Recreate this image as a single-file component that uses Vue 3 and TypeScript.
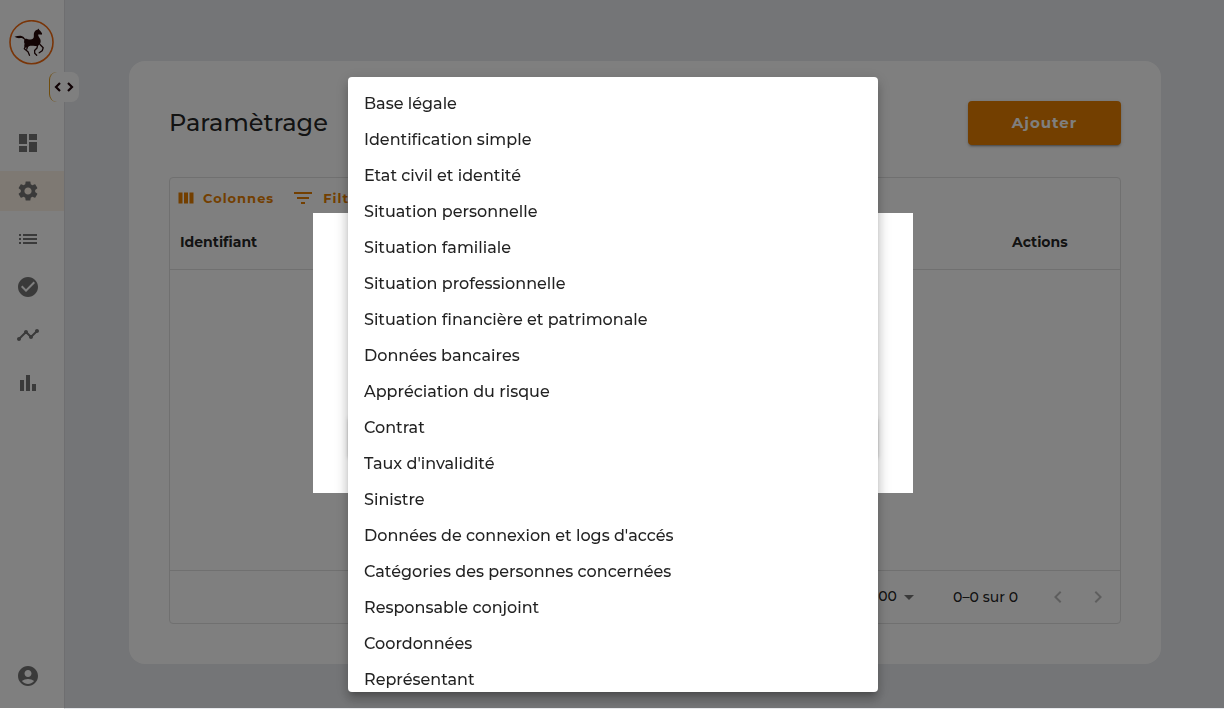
<script setup lang="ts">
const navItems: { label: string; path: string; active?: boolean }[] = [
  { label: 'Tableau de bord', path: 'M3 13h8V3H3v10zm0 8h8v-6H3v6zm10 0h8V11h-8v10zm0-18v6h8V3h-8z' },
  { label: 'Paramètrage', active: true, path: 'M19.14 12.94c.04-.3.06-.61.06-.94 0-.32-.02-.64-.07-.94l2.03-1.58c.18-.14.23-.41.12-.61l-1.92-3.32c-.12-.22-.37-.29-.59-.22l-2.39.96c-.5-.38-1.03-.7-1.62-.94l-.36-2.54c-.04-.24-.24-.41-.48-.41h-3.84c-.24 0-.43.17-.47.41l-.36 2.54c-.59.24-1.13.57-1.62.94l-2.39-.96c-.22-.08-.47 0-.59.22L2.74 8.87c-.12.21-.08.47.12.61l2.03 1.58c-.05.3-.09.63-.09.94s.02.64.07.94l-2.03 1.58c-.18.14-.23.41-.12.61l1.92 3.32c.12.22.37.29.59.22l2.39-.96c.5.38 1.03.7 1.62.94l.36 2.54c.05.24.24.41.48.41h3.84c.24 0 .44-.17.47-.41l.36-2.54c.59-.24 1.13-.56 1.62-.94l2.39.96c.22.08.47 0 .59-.22l1.92-3.32c.12-.22.07-.47-.12-.61l-2.01-1.58zM12 15.6c-1.98 0-3.6-1.62-3.6-3.6s1.62-3.6 3.6-3.6 3.6 1.62 3.6 3.6-1.62 3.6-3.6 3.6z' },
  { label: 'Liste', path: 'M3 13h2v-2H3v2zm0 4h2v-2H3v2zm0-8h2V7H3v2zm4 4h14v-2H7v2zm0 4h14v-2H7v2zM7 7v2h14V7H7z' },
  { label: 'Validation', path: 'M12 2C6.48 2 2 6.48 2 12s4.48 10 10 10 10-4.48 10-10S17.52 2 12 2zm-2 15l-5-5 1.41-1.41L10 14.17l7.59-7.59L19 8l-9 9z' },
  { label: 'Suivi', path: 'M23 8c0 1.1-.9 2-2 2-.18 0-.35-.02-.51-.07l-3.56 3.55c.05.16.07.34.07.52 0 1.1-.9 2-2 2s-2-.9-2-2c0-.18.02-.36.07-.52l-2.55-2.55c-.16.05-.34.07-.52.07s-.36-.02-.52-.07l-4.55 4.56c.05.16.07.33.07.51 0 1.1-.9 2-2 2s-2-.9-2-2 .9-2 2-2c.18 0 .35.02.51.07l4.56-4.55C8.02 9.36 8 9.18 8 9c0-1.1.9-2 2-2s2 .9 2 2c0 .18-.02.36-.07.52l2.55 2.55c.16-.05.34-.07.52-.07s.36.02.52.07l3.55-3.56C19.02 8.35 19 8.18 19 8c0-1.1.9-2 2-2s2 .9 2 2z' },
  { label: 'Statistiques', path: 'M4 9h4v11H4zm12 4h4v7h-4zm-6-9h4v16h-4z' },
]

const options: string[] = [
  'Base légale',
  'Identification simple',
  'Etat civil et identité',
  'Situation personnelle',
  'Situation familiale',
  'Situation professionnelle',
  'Situation financière et patrimonale',
  'Données bancaires',
  'Appréciation du risque',
  'Contrat',
  "Taux d'invalidité",
  'Sinistre',
  "Données de connexion et logs d'accés",
  'Catégories des personnes concernées',
  'Responsable conjoint',
  'Coordonnées',
  'Représentant',
]
</script>

<template>
  <div class="app">
    <aside class="sidebar">
      <a href="#" class="logo" aria-label="Accueil">
        <svg viewBox="0 0 45 45" width="45" height="45">
          <circle cx="22.500" cy="22.200" r="21.500" fill="#fff" stroke="#f26a10" stroke-width="1.600" />
          <path
            fill="#260808"
            d="M5.500 16.800C8 16.200 10 15.600 12.500 16c2 .3 2.600 1.600 3.600 2.800 1.600-.3 3.400.8 5.400.7 2-.1 3-.8 3.300-2.400.2-2-.4-3.800.8-5.400.9-1.400 2-2 3.300-2.200l.9-1 .3 1.300c1.300.7 1.700 2 3 3.400l-.4 1.500-1.500-.1-2-.2c-.2 1.700 1.200 3 2 4.700.8 1.900.6 3.900-.6 5.500-1 1.100-2.600 1.400-4.400 1.500-2.500-.3-4.600-.5-6.200.1-1.200 1.300-2.700 1.500-4 1.100-1-1-.8-2.400-.4-3.600-.9-1.600-.3-3-.3-4.300-1.200-.8-2.200-1.600-3.600-1.400-2 .4-4.300.1-6.200-1.200z"
          />
          <path
            fill="none"
            stroke="#260808"
            stroke-width="1.300"
            stroke-linecap="round"
            stroke-linejoin="round"
            d="M16.500 26l-1.200 2.800 3.700 3 1.500 3.500M18.500 26.500L17.800 29M28.500 25.500l-.5 2.500-2.400 2.500.1 2.800 2 2M31 24.500l3.200 3.300-1 3-3 2"
          />
        </svg>
      </a>
      <nav class="nav">
        <a v-for="item in navItems" :key="item.label" href="#" :class="{ active: item.active }" :aria-label="item.label">
          <svg viewBox="0 0 24 24" width="24" height="24"><path :d="item.path" /></svg>
        </a>
      </nav>
      <a href="#" class="account" aria-label="Mon compte">
        <svg viewBox="0 0 24 24" width="24" height="24"><path d="M12 2C6.480 2 2 6.480 2 12s4.480 10 10 10 10-4.480 10-10S17.520 2 12 2zm0 4c1.930 0 3.500 1.570 3.500 3.500S13.930 13 12 13s-3.500-1.570-3.500-3.500S10.070 6 12 6zm0 14c-2.030 0-4.430-.82-6.140-2.880C7.550 15.800 9.680 15 12 15s4.450.8 6.140 2.120C16.430 19.180 14.030 20 12 20z" /></svg>
      </a>
      <button type="button" class="toggle" aria-label="Déplier le menu">
        <svg viewBox="0 0 20 10" width="20" height="10"><path d="M6 1L2 5l4 4M14 1l4 4-4 4" fill="none" stroke="#200509" stroke-width="2.200" /></svg>
      </button>
    </aside>

    <main class="content">
      <section class="card">
        <header class="card-head">
          <h1>Paramètrage</h1>
          <button type="button" class="add">Ajouter</button>
        </header>
        <div class="grid">
          <div class="toolbar">
            <button type="button">
              <svg viewBox="0 0 24 24" width="24" height="24"><path d="M7.500 6.500h4v11h-4zM13 6.500h4v11h-4zM18.500 6.500h4v11h-4z" /></svg>
              Colonnes
            </button>
            <button type="button">
              <svg viewBox="0 0 24 24" width="24" height="24"><path d="M10 18h4v-2h-4v2zM3 6v2h18V6H3zm3 7h12v-2H6v2z" /></svg>
              Filtres
            </button>
          </div>
          <table>
            <thead>
              <tr><th scope="col">Identifiant</th><th scope="col" class="actions">Actions</th></tr>
            </thead>
          </table>
          <div class="rows"></div>
          <footer class="pager">
            <label class="size">
              <select aria-label="Lignes par page"><option>100</option></select>
              <svg viewBox="0 0 24 24" width="24" height="24"><path d="M7 10l5 5 5-5z" /></svg>
            </label>
            <span class="range">0–0 sur 0</span>
            <button type="button" disabled aria-label="Page précédente">
              <svg viewBox="0 0 24 24" width="24" height="24"><path d="M15.410 16.590L10.830 12l4.580-4.590L14 6l-6 6 6 6z" /></svg>
            </button>
            <button type="button" disabled aria-label="Page suivante">
              <svg viewBox="0 0 24 24" width="24" height="24"><path d="M8.590 16.590L13.170 12 8.590 7.410 10 6l6 6-6 6z" /></svg>
            </button>
          </footer>
        </div>
      </section>
    </main>

    <div class="backdrop"></div>
    <div class="layer center">
      <div class="dialog" role="dialog" aria-modal="true"><div class="submit"></div></div>
    </div>
    <div class="layer">
      <ul class="menu" role="listbox" aria-label="Catégorie">
        <li v-for="option in options" :key="option" role="option" tabindex="0">{{ option }}</li>
      </ul>
    </div>
  </div>
</template>

<style>
body {
  margin: 0;
  background: #e8eaee;
}
</style>

<style scoped>
* {
  box-sizing: border-box;
}
.app {
  display: flex;
  height: 100vh;
  overflow: hidden;
  font-family: Montserrat, Inter, "Noto Sans", sans-serif;
  font-weight: 500;
  color: rgba(0, 0, 0, 0.87);
}
svg {
  display: block;
  flex: none;
}
button {
  border: 0;
  background: none;
  padding: 0;
  font: inherit;
}
.sidebar {
  position: relative;
  flex: 0 0 65px;
  display: flex;
  flex-direction: column;
  background: #fff;
  border-right: 1px solid #dcdde0;
}
.logo {
  margin: 20px 0 58px 9px;
}
.nav {
  display: flex;
  flex-direction: column;
  gap: 8px;
}
.nav a,
.account {
  display: flex;
  align-items: center;
  height: 40px;
  padding-left: 16px;
}
.nav svg,
.account svg {
  fill: #757575;
}
.nav a.active {
  background: #fdf3e6;
}
.account {
  margin-top: auto;
  margin-bottom: 13px;
}
.toggle {
  position: absolute;
  top: 72px;
  right: -15px;
  width: 30px;
  height: 30px;
  padding-right: 2px;
  display: flex;
  align-items: center;
  justify-content: center;
  background: #fff;
  border-left: 1px solid #e09a1a;
  border-radius: 8px;
}
.content {
  flex: 1;
  padding: 61px 63px 45px 64px;
}
.card {
  height: 603px;
  padding: 40px;
  background: #fff;
  border-radius: 16px;
}
.card-head {
  display: flex;
  align-items: center;
  justify-content: space-between;
  margin-bottom: 32px;
}
h1 {
  margin: 0;
  padding-bottom: 2px;
  font-size: 24px;
  font-weight: 500;
}
.add {
  width: 153px;
  height: 44px;
  padding-bottom: 2px;
  border-radius: 4px;
  background: #e67e00;
  color: #fff;
  font-size: 15px;
  font-weight: 700;
  letter-spacing: 1px;
  box-shadow: 0 3px 1px -2px rgba(0, 0, 0, 0.2), 0 2px 2px rgba(0, 0, 0, 0.14), 0 1px 5px rgba(0, 0, 0, 0.12);
}
.grid {
  height: 447px;
  display: flex;
  flex-direction: column;
  border: 1px solid #e0e0e0;
  border-radius: 4px;
}
.toolbar {
  display: flex;
  gap: 17px;
  height: 35px;
  padding: 5px 1px 0;
}
.toolbar button {
  display: flex;
  align-items: center;
  gap: 8px;
  color: #e67e00;
  font-size: 13px;
  font-weight: 700;
  letter-spacing: 1px;
}
.toolbar svg {
  fill: currentColor;
}
table {
  width: 100%;
  border-collapse: collapse;
  border-bottom: 1px solid #e0e0e0;
}
th {
  height: 56px;
  padding: 2px 10px 0;
  text-align: left;
  font-size: 14px;
  font-weight: 700;
}
th.actions {
  width: 118px;
}
.rows {
  flex: 1;
}
.pager {
  display: flex;
  align-items: center;
  justify-content: flex-end;
  height: 53px;
  padding-right: 2px;
  border-top: 1px solid #e0e0e0;
  font-size: 14px;
}
.size {
  display: flex;
  align-items: center;
}
.size svg {
  fill: #757575;
}
select {
  appearance: none;
  border: 0;
  background: none;
  padding: 0 0 2px;
  font: inherit;
  color: inherit;
}
.range {
  margin: 0 20px 0 32px;
}
.pager button {
  width: 40px;
  display: flex;
  justify-content: center;
}
.pager button svg {
  fill: #bdbdbd;
}
.backdrop {
  position: fixed;
  inset: 0 0 1px;
  background: rgba(0, 0, 0, 0.5);
}
.layer {
  position: fixed;
  inset: 0 0 1px;
  padding: 77px 0 16px 2px;
  display: flex;
  justify-content: center;
}
.layer.center {
  padding: 0 0 2px 2px;
  align-items: center;
}
.dialog {
  width: 600px;
  height: 280px;
  padding: 35px;
  display: flex;
  align-items: flex-end;
  background: #fff;
}
.submit {
  width: 100%;
  height: 42px;
  border-radius: 4px;
  background: #e67e00;
  box-shadow: 0 3px 1px -2px rgba(0, 0, 0, 0.2), 0 2px 2px rgba(0, 0, 0, 0.14), 0 1px 5px rgba(0, 0, 0, 0.12);
}
.menu {
  width: 530px;
  margin: 0;
  padding: 9px 0 8px;
  overflow: hidden;
  list-style: none;
  background: #fff;
  border-radius: 4px;
  box-shadow: 0 5px 5px -3px rgba(0, 0, 0, 0.2), 0 8px 10px 1px rgba(0, 0, 0, 0.14), 0 3px 14px 2px rgba(0, 0, 0, 0.12);
}
.menu li {
  padding: 6px 16px;
  font-size: 16px;
  line-height: 24px;
  white-space: nowrap;
}
</style>
